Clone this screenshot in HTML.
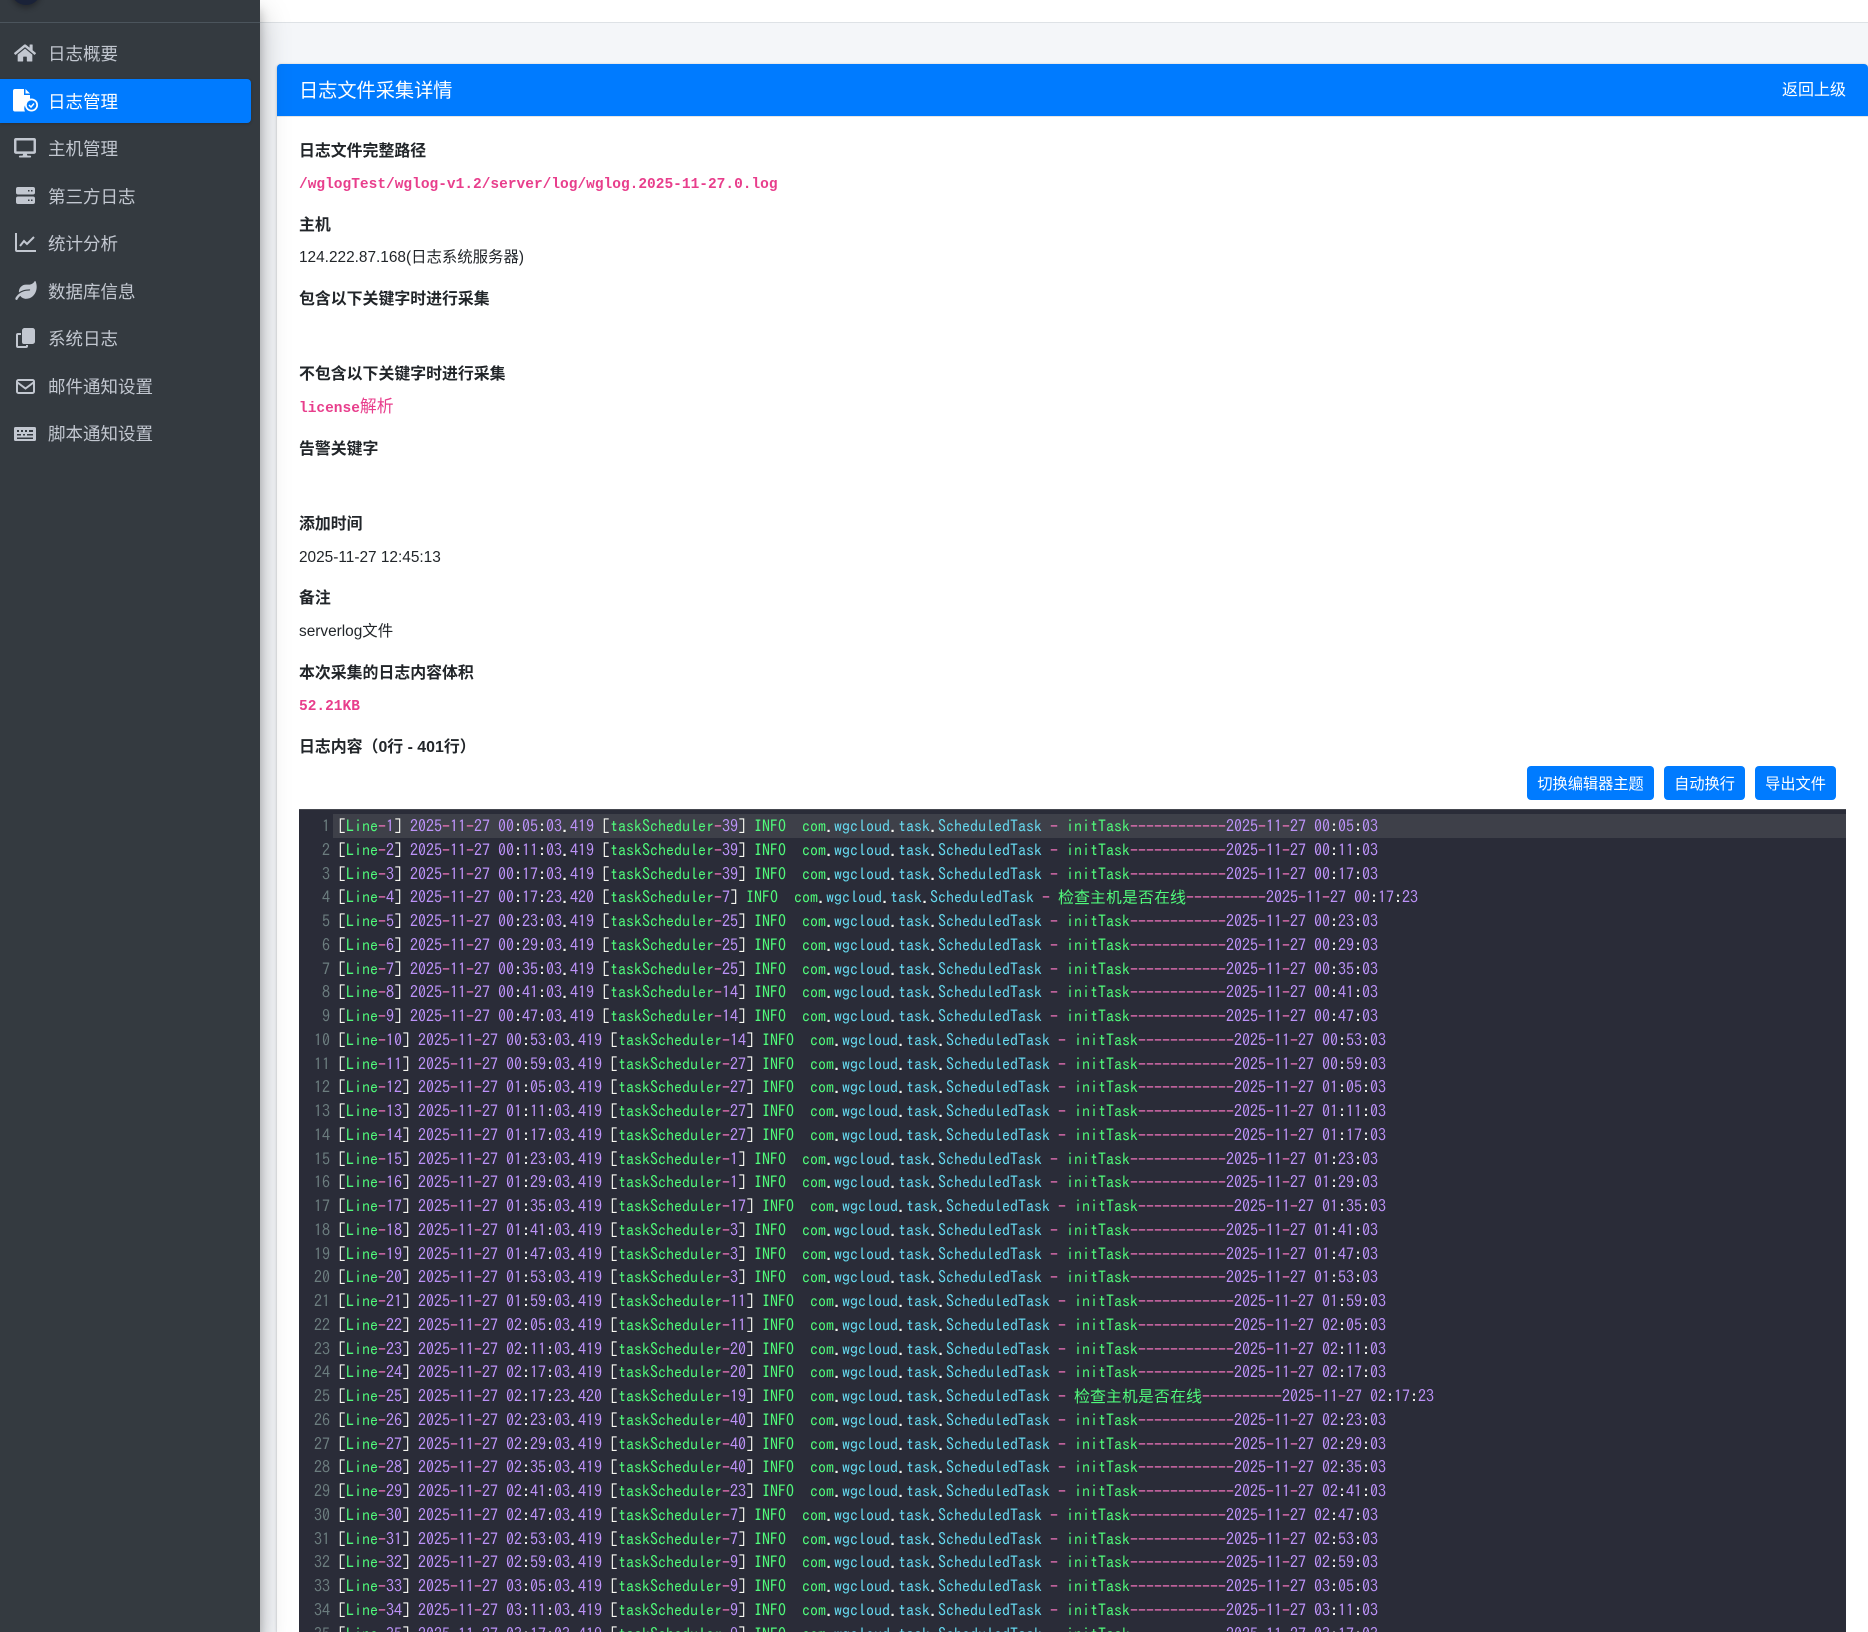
<!DOCTYPE html>
<html lang="zh-CN"><head><meta charset="utf-8"><title>日志文件采集详情</title>
<style>
html,body{margin:0;padding:0;width:1868px;height:1632px;overflow:hidden;background:#f4f6f9}
body{position:relative;font-family:"Liberation Sans","Noto Sans CJK SC",sans-serif;color:#212529;font-size:16px}
.abs,.t,.n,.b,.c,.v{position:absolute;white-space:nowrap}
#head{left:260px;top:0;width:1608px;height:22px;background:#fff;border-bottom:1px solid #dee2e6}
#card{left:277px;top:64px;width:1591px;height:1568px;background:#fff;border-radius:4px 4px 0 0;box-shadow:0 0 1px rgba(0,0,0,.125),0 1px 3px rgba(0,0,0,.2)}
#ch{left:277px;top:64px;width:1591px;height:52px;background:#007bff;border-radius:4px 4px 0 0;box-shadow:0 1px 0 rgba(0,0,0,.1)}
#side{left:0;top:0;width:260px;height:1632px;background:#343a40;box-shadow:0 14px 28px rgba(0,0,0,.25),0 10px 10px rgba(0,0,0,.22);z-index:5;overflow:hidden}
#sep{left:0;top:22px;width:260px;height:1px;background:#4b545c}
#ava{left:11px;top:-25px;width:30px;height:30px;border-radius:50%;background:#1a2238;box-shadow:0 3px 6px rgba(0,0,0,.3)}
#brand{left:130px;top:-21px;font-size:17.5px;line-height:24px;color:#d5d8dc}
#act{left:0;top:79px;width:251px;height:44px;background:#007bff;border-radius:0 4px 4px 0;box-shadow:0 1px 3px rgba(0,0,0,.2)}
.n{left:48px;font-size:17.5px;line-height:24px;color:#c2c7d0;margin-top:1px}
svg{position:absolute;fill:#c2c7d0}
.t{left:299px;font-weight:700;line-height:24px;font-size:15.9px;margin-top:2px}
.v{left:299px;line-height:24px;font-size:15.4px;margin-top:1px}
.c{left:299px;line-height:24px;font-family:"Liberation Mono","Noto Sans CJK SC",monospace;font-weight:700;font-size:14.5px;color:#e83e8c;margin-top:1.500px}
.b{top:766px;height:34px;line-height:38px;background:#007bff;color:#fff;border-radius:4px;text-align:center;font-size:15.2px}
#ed{left:299px;top:809px;width:1547px;height:823px;background:#2a2c38;border-top:1px solid #45474f;box-sizing:border-box;overflow:hidden}
#al{left:34px;top:4.2px;width:1513px;height:23.75px;background:#3e4049}
#gt{left:0;top:4.2px;width:31px;text-align:right;color:#6c7d7f}
#ln{left:39px;top:4.2px;color:#bd93f9}
#gt,#ln{font:16px/23.75px "IPAGothic","WenQuanYi Zen Hei",monospace;margin-top:1px}
#gt div,#ln div{height:23.75px;white-space:pre}
a{color:#f8f8f2}
b{color:#50fa7b;font-weight:400}
u{color:#ff79c6;text-decoration:none}
em{color:#66d9ef;font-style:normal}
</style></head><body>
<div class="abs" id="head"></div>
<div class="abs" id="card"></div>
<div class="abs" id="ch"></div>
<div class="abs" style="left:299px;top:80px;font-size:19.2px;line-height:24px;color:#fff">日志文件采集详情</div>
<div class="abs" style="left:1782px;top:79px;font-size:16px;line-height:24px;color:#fff">返回上级</div>

<div class="t" style="top:138px">日志文件完整路径</div>
<div class="c" style="top:171px">/wglogTest/wglog-v1.2/server/log/wglog.2025-11-27.0.log</div>
<div class="t" style="top:212px">主机</div>
<div class="v" style="top:245px">124.222.87.168(日志系统服务器)</div>
<div class="t" style="top:286px">包含以下关键字时进行采集</div>
<div class="t" style="top:361px">不包含以下关键字时进行采集</div>
<div class="c" style="top:395px">license<span style="font-size:16.8px;font-weight:400">解析</span></div>
<div class="t" style="top:436px">告警关键字</div>
<div class="t" style="top:511px">添加时间</div>
<div class="v" style="top:545px">2025-11-27 12:45:13</div>
<div class="t" style="top:585px">备注</div>
<div class="v" style="top:619px">serverlog文件</div>
<div class="t" style="top:660px">本次采集的日志内容体积</div>
<div class="c" style="top:693px">52.21KB</div>
<div class="t" style="top:734px">日志内容（0行 - 401行）</div>

<div class="b" style="left:1527px;width:127px">切换编辑器主题</div>
<div class="b" style="left:1664px;width:81px">自动换行</div>
<div class="b" style="left:1755px;width:81px">导出文件</div>

<div class="abs" id="ed">
<div class="abs" id="al"></div>
<div class="abs" id="gt"><div>1</div><div>2</div><div>3</div><div>4</div><div>5</div><div>6</div><div>7</div><div>8</div><div>9</div><div>10</div><div>11</div><div>12</div><div>13</div><div>14</div><div>15</div><div>16</div><div>17</div><div>18</div><div>19</div><div>20</div><div>21</div><div>22</div><div>23</div><div>24</div><div>25</div><div>26</div><div>27</div><div>28</div><div>29</div><div>30</div><div>31</div><div>32</div><div>33</div><div>34</div><div>35</div></div>
<div class="abs" id="ln">
<div><a>[</a><b>Line</b><u>-</u>1<a>]</a> 2025<u>-</u>11<u>-</u>27 00<a>:</a>05<a>:</a>03<a>.</a>419 <a>[</a><b>taskScheduler</b><u>-</u>39<a>]</a> <b>INFO</b>  <b>com</b><a>.</a><em>wgcloud</em><a>.</a><em>task</em><a>.</a><em>ScheduledTask</em> <u>-</u> <b>initTask</b><u>------------</u>2025<u>-</u>11<u>-</u>27 00<a>:</a>05<a>:</a>03</div>
<div><a>[</a><b>Line</b><u>-</u>2<a>]</a> 2025<u>-</u>11<u>-</u>27 00<a>:</a>11<a>:</a>03<a>.</a>419 <a>[</a><b>taskScheduler</b><u>-</u>39<a>]</a> <b>INFO</b>  <b>com</b><a>.</a><em>wgcloud</em><a>.</a><em>task</em><a>.</a><em>ScheduledTask</em> <u>-</u> <b>initTask</b><u>------------</u>2025<u>-</u>11<u>-</u>27 00<a>:</a>11<a>:</a>03</div>
<div><a>[</a><b>Line</b><u>-</u>3<a>]</a> 2025<u>-</u>11<u>-</u>27 00<a>:</a>17<a>:</a>03<a>.</a>419 <a>[</a><b>taskScheduler</b><u>-</u>39<a>]</a> <b>INFO</b>  <b>com</b><a>.</a><em>wgcloud</em><a>.</a><em>task</em><a>.</a><em>ScheduledTask</em> <u>-</u> <b>initTask</b><u>------------</u>2025<u>-</u>11<u>-</u>27 00<a>:</a>17<a>:</a>03</div>
<div><a>[</a><b>Line</b><u>-</u>4<a>]</a> 2025<u>-</u>11<u>-</u>27 00<a>:</a>17<a>:</a>23<a>.</a>420 <a>[</a><b>taskScheduler</b><u>-</u>7<a>]</a> <b>INFO</b>  <b>com</b><a>.</a><em>wgcloud</em><a>.</a><em>task</em><a>.</a><em>ScheduledTask</em> <u>-</u> <b>检查主机是否在线</b><u>----------</u>2025<u>-</u>11<u>-</u>27 00<a>:</a>17<a>:</a>23</div>
<div><a>[</a><b>Line</b><u>-</u>5<a>]</a> 2025<u>-</u>11<u>-</u>27 00<a>:</a>23<a>:</a>03<a>.</a>419 <a>[</a><b>taskScheduler</b><u>-</u>25<a>]</a> <b>INFO</b>  <b>com</b><a>.</a><em>wgcloud</em><a>.</a><em>task</em><a>.</a><em>ScheduledTask</em> <u>-</u> <b>initTask</b><u>------------</u>2025<u>-</u>11<u>-</u>27 00<a>:</a>23<a>:</a>03</div>
<div><a>[</a><b>Line</b><u>-</u>6<a>]</a> 2025<u>-</u>11<u>-</u>27 00<a>:</a>29<a>:</a>03<a>.</a>419 <a>[</a><b>taskScheduler</b><u>-</u>25<a>]</a> <b>INFO</b>  <b>com</b><a>.</a><em>wgcloud</em><a>.</a><em>task</em><a>.</a><em>ScheduledTask</em> <u>-</u> <b>initTask</b><u>------------</u>2025<u>-</u>11<u>-</u>27 00<a>:</a>29<a>:</a>03</div>
<div><a>[</a><b>Line</b><u>-</u>7<a>]</a> 2025<u>-</u>11<u>-</u>27 00<a>:</a>35<a>:</a>03<a>.</a>419 <a>[</a><b>taskScheduler</b><u>-</u>25<a>]</a> <b>INFO</b>  <b>com</b><a>.</a><em>wgcloud</em><a>.</a><em>task</em><a>.</a><em>ScheduledTask</em> <u>-</u> <b>initTask</b><u>------------</u>2025<u>-</u>11<u>-</u>27 00<a>:</a>35<a>:</a>03</div>
<div><a>[</a><b>Line</b><u>-</u>8<a>]</a> 2025<u>-</u>11<u>-</u>27 00<a>:</a>41<a>:</a>03<a>.</a>419 <a>[</a><b>taskScheduler</b><u>-</u>14<a>]</a> <b>INFO</b>  <b>com</b><a>.</a><em>wgcloud</em><a>.</a><em>task</em><a>.</a><em>ScheduledTask</em> <u>-</u> <b>initTask</b><u>------------</u>2025<u>-</u>11<u>-</u>27 00<a>:</a>41<a>:</a>03</div>
<div><a>[</a><b>Line</b><u>-</u>9<a>]</a> 2025<u>-</u>11<u>-</u>27 00<a>:</a>47<a>:</a>03<a>.</a>419 <a>[</a><b>taskScheduler</b><u>-</u>14<a>]</a> <b>INFO</b>  <b>com</b><a>.</a><em>wgcloud</em><a>.</a><em>task</em><a>.</a><em>ScheduledTask</em> <u>-</u> <b>initTask</b><u>------------</u>2025<u>-</u>11<u>-</u>27 00<a>:</a>47<a>:</a>03</div>
<div><a>[</a><b>Line</b><u>-</u>10<a>]</a> 2025<u>-</u>11<u>-</u>27 00<a>:</a>53<a>:</a>03<a>.</a>419 <a>[</a><b>taskScheduler</b><u>-</u>14<a>]</a> <b>INFO</b>  <b>com</b><a>.</a><em>wgcloud</em><a>.</a><em>task</em><a>.</a><em>ScheduledTask</em> <u>-</u> <b>initTask</b><u>------------</u>2025<u>-</u>11<u>-</u>27 00<a>:</a>53<a>:</a>03</div>
<div><a>[</a><b>Line</b><u>-</u>11<a>]</a> 2025<u>-</u>11<u>-</u>27 00<a>:</a>59<a>:</a>03<a>.</a>419 <a>[</a><b>taskScheduler</b><u>-</u>27<a>]</a> <b>INFO</b>  <b>com</b><a>.</a><em>wgcloud</em><a>.</a><em>task</em><a>.</a><em>ScheduledTask</em> <u>-</u> <b>initTask</b><u>------------</u>2025<u>-</u>11<u>-</u>27 00<a>:</a>59<a>:</a>03</div>
<div><a>[</a><b>Line</b><u>-</u>12<a>]</a> 2025<u>-</u>11<u>-</u>27 01<a>:</a>05<a>:</a>03<a>.</a>419 <a>[</a><b>taskScheduler</b><u>-</u>27<a>]</a> <b>INFO</b>  <b>com</b><a>.</a><em>wgcloud</em><a>.</a><em>task</em><a>.</a><em>ScheduledTask</em> <u>-</u> <b>initTask</b><u>------------</u>2025<u>-</u>11<u>-</u>27 01<a>:</a>05<a>:</a>03</div>
<div><a>[</a><b>Line</b><u>-</u>13<a>]</a> 2025<u>-</u>11<u>-</u>27 01<a>:</a>11<a>:</a>03<a>.</a>419 <a>[</a><b>taskScheduler</b><u>-</u>27<a>]</a> <b>INFO</b>  <b>com</b><a>.</a><em>wgcloud</em><a>.</a><em>task</em><a>.</a><em>ScheduledTask</em> <u>-</u> <b>initTask</b><u>------------</u>2025<u>-</u>11<u>-</u>27 01<a>:</a>11<a>:</a>03</div>
<div><a>[</a><b>Line</b><u>-</u>14<a>]</a> 2025<u>-</u>11<u>-</u>27 01<a>:</a>17<a>:</a>03<a>.</a>419 <a>[</a><b>taskScheduler</b><u>-</u>27<a>]</a> <b>INFO</b>  <b>com</b><a>.</a><em>wgcloud</em><a>.</a><em>task</em><a>.</a><em>ScheduledTask</em> <u>-</u> <b>initTask</b><u>------------</u>2025<u>-</u>11<u>-</u>27 01<a>:</a>17<a>:</a>03</div>
<div><a>[</a><b>Line</b><u>-</u>15<a>]</a> 2025<u>-</u>11<u>-</u>27 01<a>:</a>23<a>:</a>03<a>.</a>419 <a>[</a><b>taskScheduler</b><u>-</u>1<a>]</a> <b>INFO</b>  <b>com</b><a>.</a><em>wgcloud</em><a>.</a><em>task</em><a>.</a><em>ScheduledTask</em> <u>-</u> <b>initTask</b><u>------------</u>2025<u>-</u>11<u>-</u>27 01<a>:</a>23<a>:</a>03</div>
<div><a>[</a><b>Line</b><u>-</u>16<a>]</a> 2025<u>-</u>11<u>-</u>27 01<a>:</a>29<a>:</a>03<a>.</a>419 <a>[</a><b>taskScheduler</b><u>-</u>1<a>]</a> <b>INFO</b>  <b>com</b><a>.</a><em>wgcloud</em><a>.</a><em>task</em><a>.</a><em>ScheduledTask</em> <u>-</u> <b>initTask</b><u>------------</u>2025<u>-</u>11<u>-</u>27 01<a>:</a>29<a>:</a>03</div>
<div><a>[</a><b>Line</b><u>-</u>17<a>]</a> 2025<u>-</u>11<u>-</u>27 01<a>:</a>35<a>:</a>03<a>.</a>419 <a>[</a><b>taskScheduler</b><u>-</u>17<a>]</a> <b>INFO</b>  <b>com</b><a>.</a><em>wgcloud</em><a>.</a><em>task</em><a>.</a><em>ScheduledTask</em> <u>-</u> <b>initTask</b><u>------------</u>2025<u>-</u>11<u>-</u>27 01<a>:</a>35<a>:</a>03</div>
<div><a>[</a><b>Line</b><u>-</u>18<a>]</a> 2025<u>-</u>11<u>-</u>27 01<a>:</a>41<a>:</a>03<a>.</a>419 <a>[</a><b>taskScheduler</b><u>-</u>3<a>]</a> <b>INFO</b>  <b>com</b><a>.</a><em>wgcloud</em><a>.</a><em>task</em><a>.</a><em>ScheduledTask</em> <u>-</u> <b>initTask</b><u>------------</u>2025<u>-</u>11<u>-</u>27 01<a>:</a>41<a>:</a>03</div>
<div><a>[</a><b>Line</b><u>-</u>19<a>]</a> 2025<u>-</u>11<u>-</u>27 01<a>:</a>47<a>:</a>03<a>.</a>419 <a>[</a><b>taskScheduler</b><u>-</u>3<a>]</a> <b>INFO</b>  <b>com</b><a>.</a><em>wgcloud</em><a>.</a><em>task</em><a>.</a><em>ScheduledTask</em> <u>-</u> <b>initTask</b><u>------------</u>2025<u>-</u>11<u>-</u>27 01<a>:</a>47<a>:</a>03</div>
<div><a>[</a><b>Line</b><u>-</u>20<a>]</a> 2025<u>-</u>11<u>-</u>27 01<a>:</a>53<a>:</a>03<a>.</a>419 <a>[</a><b>taskScheduler</b><u>-</u>3<a>]</a> <b>INFO</b>  <b>com</b><a>.</a><em>wgcloud</em><a>.</a><em>task</em><a>.</a><em>ScheduledTask</em> <u>-</u> <b>initTask</b><u>------------</u>2025<u>-</u>11<u>-</u>27 01<a>:</a>53<a>:</a>03</div>
<div><a>[</a><b>Line</b><u>-</u>21<a>]</a> 2025<u>-</u>11<u>-</u>27 01<a>:</a>59<a>:</a>03<a>.</a>419 <a>[</a><b>taskScheduler</b><u>-</u>11<a>]</a> <b>INFO</b>  <b>com</b><a>.</a><em>wgcloud</em><a>.</a><em>task</em><a>.</a><em>ScheduledTask</em> <u>-</u> <b>initTask</b><u>------------</u>2025<u>-</u>11<u>-</u>27 01<a>:</a>59<a>:</a>03</div>
<div><a>[</a><b>Line</b><u>-</u>22<a>]</a> 2025<u>-</u>11<u>-</u>27 02<a>:</a>05<a>:</a>03<a>.</a>419 <a>[</a><b>taskScheduler</b><u>-</u>11<a>]</a> <b>INFO</b>  <b>com</b><a>.</a><em>wgcloud</em><a>.</a><em>task</em><a>.</a><em>ScheduledTask</em> <u>-</u> <b>initTask</b><u>------------</u>2025<u>-</u>11<u>-</u>27 02<a>:</a>05<a>:</a>03</div>
<div><a>[</a><b>Line</b><u>-</u>23<a>]</a> 2025<u>-</u>11<u>-</u>27 02<a>:</a>11<a>:</a>03<a>.</a>419 <a>[</a><b>taskScheduler</b><u>-</u>20<a>]</a> <b>INFO</b>  <b>com</b><a>.</a><em>wgcloud</em><a>.</a><em>task</em><a>.</a><em>ScheduledTask</em> <u>-</u> <b>initTask</b><u>------------</u>2025<u>-</u>11<u>-</u>27 02<a>:</a>11<a>:</a>03</div>
<div><a>[</a><b>Line</b><u>-</u>24<a>]</a> 2025<u>-</u>11<u>-</u>27 02<a>:</a>17<a>:</a>03<a>.</a>419 <a>[</a><b>taskScheduler</b><u>-</u>20<a>]</a> <b>INFO</b>  <b>com</b><a>.</a><em>wgcloud</em><a>.</a><em>task</em><a>.</a><em>ScheduledTask</em> <u>-</u> <b>initTask</b><u>------------</u>2025<u>-</u>11<u>-</u>27 02<a>:</a>17<a>:</a>03</div>
<div><a>[</a><b>Line</b><u>-</u>25<a>]</a> 2025<u>-</u>11<u>-</u>27 02<a>:</a>17<a>:</a>23<a>.</a>420 <a>[</a><b>taskScheduler</b><u>-</u>19<a>]</a> <b>INFO</b>  <b>com</b><a>.</a><em>wgcloud</em><a>.</a><em>task</em><a>.</a><em>ScheduledTask</em> <u>-</u> <b>检查主机是否在线</b><u>----------</u>2025<u>-</u>11<u>-</u>27 02<a>:</a>17<a>:</a>23</div>
<div><a>[</a><b>Line</b><u>-</u>26<a>]</a> 2025<u>-</u>11<u>-</u>27 02<a>:</a>23<a>:</a>03<a>.</a>419 <a>[</a><b>taskScheduler</b><u>-</u>40<a>]</a> <b>INFO</b>  <b>com</b><a>.</a><em>wgcloud</em><a>.</a><em>task</em><a>.</a><em>ScheduledTask</em> <u>-</u> <b>initTask</b><u>------------</u>2025<u>-</u>11<u>-</u>27 02<a>:</a>23<a>:</a>03</div>
<div><a>[</a><b>Line</b><u>-</u>27<a>]</a> 2025<u>-</u>11<u>-</u>27 02<a>:</a>29<a>:</a>03<a>.</a>419 <a>[</a><b>taskScheduler</b><u>-</u>40<a>]</a> <b>INFO</b>  <b>com</b><a>.</a><em>wgcloud</em><a>.</a><em>task</em><a>.</a><em>ScheduledTask</em> <u>-</u> <b>initTask</b><u>------------</u>2025<u>-</u>11<u>-</u>27 02<a>:</a>29<a>:</a>03</div>
<div><a>[</a><b>Line</b><u>-</u>28<a>]</a> 2025<u>-</u>11<u>-</u>27 02<a>:</a>35<a>:</a>03<a>.</a>419 <a>[</a><b>taskScheduler</b><u>-</u>40<a>]</a> <b>INFO</b>  <b>com</b><a>.</a><em>wgcloud</em><a>.</a><em>task</em><a>.</a><em>ScheduledTask</em> <u>-</u> <b>initTask</b><u>------------</u>2025<u>-</u>11<u>-</u>27 02<a>:</a>35<a>:</a>03</div>
<div><a>[</a><b>Line</b><u>-</u>29<a>]</a> 2025<u>-</u>11<u>-</u>27 02<a>:</a>41<a>:</a>03<a>.</a>419 <a>[</a><b>taskScheduler</b><u>-</u>23<a>]</a> <b>INFO</b>  <b>com</b><a>.</a><em>wgcloud</em><a>.</a><em>task</em><a>.</a><em>ScheduledTask</em> <u>-</u> <b>initTask</b><u>------------</u>2025<u>-</u>11<u>-</u>27 02<a>:</a>41<a>:</a>03</div>
<div><a>[</a><b>Line</b><u>-</u>30<a>]</a> 2025<u>-</u>11<u>-</u>27 02<a>:</a>47<a>:</a>03<a>.</a>419 <a>[</a><b>taskScheduler</b><u>-</u>7<a>]</a> <b>INFO</b>  <b>com</b><a>.</a><em>wgcloud</em><a>.</a><em>task</em><a>.</a><em>ScheduledTask</em> <u>-</u> <b>initTask</b><u>------------</u>2025<u>-</u>11<u>-</u>27 02<a>:</a>47<a>:</a>03</div>
<div><a>[</a><b>Line</b><u>-</u>31<a>]</a> 2025<u>-</u>11<u>-</u>27 02<a>:</a>53<a>:</a>03<a>.</a>419 <a>[</a><b>taskScheduler</b><u>-</u>7<a>]</a> <b>INFO</b>  <b>com</b><a>.</a><em>wgcloud</em><a>.</a><em>task</em><a>.</a><em>ScheduledTask</em> <u>-</u> <b>initTask</b><u>------------</u>2025<u>-</u>11<u>-</u>27 02<a>:</a>53<a>:</a>03</div>
<div><a>[</a><b>Line</b><u>-</u>32<a>]</a> 2025<u>-</u>11<u>-</u>27 02<a>:</a>59<a>:</a>03<a>.</a>419 <a>[</a><b>taskScheduler</b><u>-</u>9<a>]</a> <b>INFO</b>  <b>com</b><a>.</a><em>wgcloud</em><a>.</a><em>task</em><a>.</a><em>ScheduledTask</em> <u>-</u> <b>initTask</b><u>------------</u>2025<u>-</u>11<u>-</u>27 02<a>:</a>59<a>:</a>03</div>
<div><a>[</a><b>Line</b><u>-</u>33<a>]</a> 2025<u>-</u>11<u>-</u>27 03<a>:</a>05<a>:</a>03<a>.</a>419 <a>[</a><b>taskScheduler</b><u>-</u>9<a>]</a> <b>INFO</b>  <b>com</b><a>.</a><em>wgcloud</em><a>.</a><em>task</em><a>.</a><em>ScheduledTask</em> <u>-</u> <b>initTask</b><u>------------</u>2025<u>-</u>11<u>-</u>27 03<a>:</a>05<a>:</a>03</div>
<div><a>[</a><b>Line</b><u>-</u>34<a>]</a> 2025<u>-</u>11<u>-</u>27 03<a>:</a>11<a>:</a>03<a>.</a>419 <a>[</a><b>taskScheduler</b><u>-</u>9<a>]</a> <b>INFO</b>  <b>com</b><a>.</a><em>wgcloud</em><a>.</a><em>task</em><a>.</a><em>ScheduledTask</em> <u>-</u> <b>initTask</b><u>------------</u>2025<u>-</u>11<u>-</u>27 03<a>:</a>11<a>:</a>03</div>
<div><a>[</a><b>Line</b><u>-</u>35<a>]</a> 2025<u>-</u>11<u>-</u>27 03<a>:</a>17<a>:</a>03<a>.</a>419 <a>[</a><b>taskScheduler</b><u>-</u>9<a>]</a> <b>INFO</b>  <b>com</b><a>.</a><em>wgcloud</em><a>.</a><em>task</em><a>.</a><em>ScheduledTask</em> <u>-</u> <b>initTask</b><u>------------</u>2025<u>-</u>11<u>-</u>27 03<a>:</a>17<a>:</a>03</div>
</div>
</div>

<div class="abs" id="side">
<div class="abs" id="ava"></div>
<div class="abs" id="brand">日志采集系统</div>
<div class="abs" id="sep"></div>
<div class="abs" id="act"></div>
<svg style="left:14px;top:43px" width="22" height="20" viewBox="0 0 576 512"><path d="M280.37 148.26L96 300.11V464a16 16 0 0 0 16 16l112.06-.29a16 16 0 0 0 15.92-16V368a16 16 0 0 1 16-16h64a16 16 0 0 1 16 16v95.64a16 16 0 0 0 16 16.05L464 480a16 16 0 0 0 16-16V300L295.67 148.26a12.19 12.19 0 0 0-15.3 0zM571.6 251.47L488 182.56V44.05a12 12 0 0 0-12-12h-56a12 12 0 0 0-12 12v72.61L318.47 43a48 48 0 0 0-61 0L4.34 251.47a12 12 0 0 0-1.6 16.9l25.5 31A12 12 0 0 0 45.15 301l235.22-193.74a12.19 12.19 0 0 1 15.3 0L530.9 301a12 12 0 0 0 16.9-1.6l25.5-31a12 12 0 0 0-1.7-16.93z"/></svg>
<svg style="left:13px;top:89px;fill:#fff" width="25" height="23" viewBox="0 0 25 23"><path d="M2 0h9v6h6v7a6.5 6.5 0 0 0-5 9.5H2a2 2 0 0 1-2-2V2a2 2 0 0 1 2-2zM12.500 0l4.500 4.500h-4.500z"/><circle cx="18.500" cy="16" r="6.500"/><circle cx="18.500" cy="16" r="4.800" fill="#007bff"/><path d="M16 16l2 2 3-3.500" fill="none" stroke="#fff" stroke-width="1.500"/></svg>
<svg style="left:14px;top:138px" width="22" height="19.500" viewBox="0 0 576 512"><path d="M528 0H48C21.500 0 0 21.500 0 48v320c0 26.500 21.500 48 48 48h192l-16 48h-72c-13.300 0-24 10.700-24 24s10.700 24 24 24h272c13.300 0 24-10.700 24-24s-10.700-24-24-24h-72l-16-48h192c26.500 0 48-21.500 48-48V48c0-26.500-21.500-48-48-48zm-16 352H64V64h448v288z"/></svg>
<svg style="left:16px;top:187px" width="19" height="17" viewBox="0 0 19 17"><path fill-rule="evenodd" d="M2 0h15a2 2 0 0 1 2 2v3.500a2 2 0 0 1-2 2H2a2 2 0 0 1-2-2V2a2 2 0 0 1 2-2zM12 3v1.500h1.500V3zM15 3v1.500h1.500V3zM2 9.500h15a2 2 0 0 1 2 2V15a2 2 0 0 1-2 2H2a2 2 0 0 1-2-2v-3.500a2 2 0 0 1 2-2zM12 12.500V14h1.500v-1.500zM15 12.500V14h1.500v-1.500z"/></svg>
<svg style="left:15px;top:233px" width="21" height="19" viewBox="0 0 21 19"><path d="M1 0v17a1 1 0 0 0 1 1h19" fill="none" stroke="#c2c7d0" stroke-width="2"/><path d="M5 13l4-5 3 3 7-7" fill="none" stroke="#c2c7d0" stroke-width="2"/></svg>
<svg style="left:15px;top:281px" width="22" height="19" viewBox="0 0 576 512"><path d="M546.200 9.700c-5.600-12.500-21.600-13-28.300-1.200C486.900 62.400 431.400 96 368 96h-80C182 96 96 182 96 288c0 7 .8 13.700 1.500 20.500C161.300 262.800 253.400 224 384 224c8.800 0 16 7.200 16 16s-7.200 16-16 16C132.600 256 26 410.100 2.400 468c-6.600 16.300 1.200 34.900 17.500 41.600 16.400 6.800 35-1.100 41.800-17.300 1.500-3.600 20.900-47.900 71.900-90.600 32.400 43.900 94 85.800 174.900 77.200C465.500 467.500 576 326.700 576 154.300c0-50.200-10.800-102.200-29.800-144.600z"/></svg>
<svg style="left:16px;top:328px" width="19" height="20" viewBox="0 0 19 20"><path d="M8 0h8.500A2.500 2.500 0 0 1 19 2.500v11a2.500 2.500 0 0 1-2.500 2.500H8a2 2 0 0 1-2-2V3a3 3 0 0 1 2-3z"/><path d="M5 6H2a1 1 0 0 0-1 1v11a1 1 0 0 0 1 1h8a1 1 0 0 0 1-1v-1" fill="none" stroke="#c2c7d0" stroke-width="2"/></svg>
<svg style="left:16px;top:379px" width="19" height="15" viewBox="0 0 19 15"><rect x="1" y="1" width="17" height="13" rx="1.500" fill="none" stroke="#c2c7d0" stroke-width="2"/><path d="M1.500 3.500L9.500 9.500l8-6" fill="none" stroke="#c2c7d0" stroke-width="2"/></svg>
<svg style="left:14px;top:427px" width="22" height="14" viewBox="0 0 22 14"><path fill-rule="evenodd" d="M1.500 0h19A1.500 1.500 0 0 1 22 1.500v11a1.500 1.500 0 0 1-1.500 1.500h-19A1.500 1.500 0 0 1 0 12.500v-11A1.500 1.500 0 0 1 1.500 0zM3 3v2h2V3zM7 3v2h2V3zM11 3v2h2V3zM15 3v2h4V3zM3 7v1.500h4V7zM9 7v1.500h2V7zM13 7v1.500h6V7zM3 10.500V12h16v-1.500z"/></svg>
<div class="n" style="top:41px">日志概要</div>
<div class="n" style="top:89px;color:#fff">日志管理</div>
<div class="n" style="top:136px">主机管理</div>
<div class="n" style="top:184px">第三方日志</div>
<div class="n" style="top:231px">统计分析</div>
<div class="n" style="top:279px">数据库信息</div>
<div class="n" style="top:326px">系统日志</div>
<div class="n" style="top:374px">邮件通知设置</div>
<div class="n" style="top:421px">脚本通知设置</div>
</div>
</body></html>
